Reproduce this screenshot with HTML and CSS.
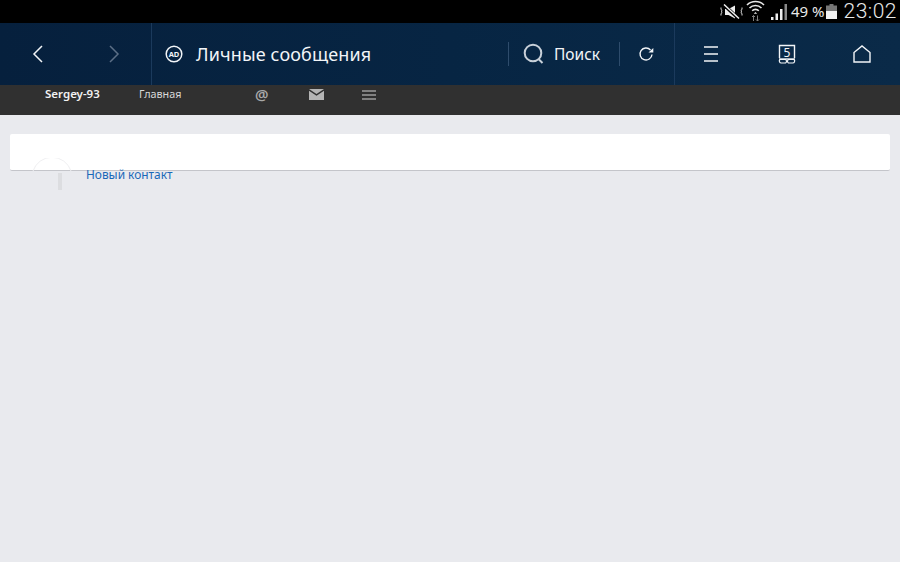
FILE: index.html
```html
<!DOCTYPE html>
<html lang="ru">
<head>
<meta charset="utf-8">
<title>Личные сообщения</title>
<link rel="stylesheet" href="styles.css">
</head>
<body>
<div class="status">
  <svg class="st-mute" width="23" height="16" viewBox="0 0 23 16"><path d="M1 3.500v2l1.200 1-1.200 1 1.200 1-1.200 1v2M22 3.500v2l-1.200 1 1.200 1-1.200 1 1.200 1v2" fill="none" stroke="#ddd" stroke-width="1"/><path d="M5 5h3.500L15 1.500v13L8.500 11H5z" fill="#eee"/><path d="M4 1l15 14" stroke="#000" stroke-width="3.400"/><path d="M4 .5l15 14" stroke="#eee" stroke-width="1.500"/></svg>
  <svg class="st-wifi" width="19" height="22" viewBox="0 0 19 22"><g fill="none" stroke="#e8e8e8" stroke-width="1.600"><path d="M1 5a12 12 0 0 1 17 0"/><path d="M3.500 8a8.500 8.500 0 0 1 12 0"/><path d="M6.200 10.800a4.600 4.600 0 0 1 6.600 0"/></g><path d="M9.500 12l1.700 1.700H7.800z" fill="#e8e8e8"/><path d="M7.500 15.500v5.500M6 17l1.500-1.500L9 17M11.500 15.500v5.500M10 19.500l1.500 1.500 1.500-1.500" fill="none" stroke="#808080" stroke-width="1"/></svg>
  <svg class="st-signal" width="18" height="18" viewBox="0 0 18 18"><path d="M1 14h2.500v3H1z" fill="#eee"/><path d="M5.500 10.500H8V17H5.500z" fill="#eee"/><path d="M10 6h2.500v11H10z" fill="#eee"/><path d="M14.500 1H17v16h-2.500z" fill="#8a8a8a"/></svg>
  <span class="st-pct">49 %</span>
  <svg class="st-batt" width="11" height="15" viewBox="0 0 11 15"><path d="M3.500 0h4v1.500H11V15H0V1.500h3.500z" fill="#777"/><path d="M0 7h11v8H0z" fill="#f2f2f2"/></svg>
  <span class="st-time">23:02</span>
</div>

<header class="nav">
  <div class="nav-arrows">
    <svg class="ico" width="12" height="20" viewBox="0 0 12 20"><path d="M10 2L2 10l8 8" fill="none" stroke="#f2f5f8" stroke-width="1.500"/></svg>
    <svg class="ico" width="12" height="20" viewBox="0 0 12 20"><path d="M2 2l8 8-8 8" fill="none" stroke="#5c6f86" stroke-width="1.500"/></svg>
  </div>
  <div class="nav-title">
    <svg class="ad" width="18" height="18" viewBox="0 0 18 18"><circle cx="9" cy="9" r="7.800" fill="none" stroke="#f2f5f8" stroke-width="1.500"/><text x="9" y="11.800" text-anchor="middle" class="ad-text">AD</text></svg>
    <span class="title">Личные сообщения</span>
  </div>
  <div class="nav-search">
    <svg width="22" height="22" viewBox="0 0 22 22"><circle cx="10" cy="10" r="8.300" fill="none" stroke="#c8d0d9" stroke-width="2"/><path d="M15.500 16l4 4" stroke="#c8d0d9" stroke-width="2"/></svg>
    <span class="search-label">Поиск</span>
  </div>
  <div class="nav-reload">
    <svg width="16" height="16" viewBox="0 0 16 16"><path d="M12.500 4A6 6 0 1 0 14 8.500" fill="none" stroke="#f2f5f8" stroke-width="1.400"/><path d="M10.500 6.500h4.800V2z" fill="#f2f5f8"/></svg>
  </div>
  <div class="nav-tools">
    <svg width="14" height="16" viewBox="0 0 14 16"><path d="M0 1h14M0 8h14M0 15h14" stroke="#f2f5f8" stroke-width="1.400"/></svg>
    <svg width="18" height="20" viewBox="0 0 18 20" class="tabs"><path d="M1.500 14V1.500h15V14" fill="none" stroke="#f2f5f8" stroke-width="1.400"/><text x="9" y="12.500" text-anchor="middle" class="tab-num">5</text><path d="M1 15h16" stroke="#f2f5f8" stroke-width="1.400"/><path d="M2 15.500h5.500a2 2 0 0 1 0 3.500H3.500A2 2 0 0 1 2 15.500zM16 15.500h-5.500a2 2 0 0 0 0 3.500h4A2 2 0 0 0 16 15.500z" fill="none" stroke="#f2f5f8" stroke-width="1.200"/></svg>
    <svg width="18" height="18" viewBox="0 0 18 18"><path d="M1 17V7.500L9 1l8 6.500V17z" fill="none" stroke="#f2f5f8" stroke-width="1.400"/></svg>
  </div>
</header>

<nav class="subnav">
  <span class="user">Sergey-93</span>
  <span class="home">Главная</span>
  <span class="at">@</span>
  <svg class="mail" width="15" height="11" viewBox="0 0 15 11"><path d="M0 0h15L7.500 5z" fill="#b4b4b4"/><path d="M0 1.800l7.500 5 7.500-5V11H0z" fill="#b4b4b4"/></svg>
  <svg class="menu" width="14" height="10" viewBox="0 0 14 10"><path d="M0 1h14M0 5h14M0 9h14" stroke="#9c9c9c" stroke-width="1.500"/></svg>
</nav>

<main class="content">
  <section class="card">
    <svg class="avatar" width="44" height="32" viewBox="0 0 44 32"><path d="M3 13a20 20 0 0 1 38 0" fill="none" stroke="#efeff1" stroke-width="1"/><path d="M28 15h4v17h-4z" fill="#dcdde0"/></svg>
    <a class="new-contact" href="#">Новый контакт</a>
  </section>
</main>
</body>
</html>
```

FILE: styles.css
```css
* { box-sizing: border-box; }
html, body { margin: 0; height: 100%; }
body {
  width: 900px;
  height: 562px;
  overflow: hidden;
  background: #e9eaee;
  font-family: "Noto Sans", "Open Sans", sans-serif;
  display: flex;
  flex-direction: column;
}
.status {
  height: 23px;
  background: #000;
  color: #e8e8e8;
  display: flex;
  align-items: center;
  justify-content: flex-end;
  padding-right: 3px;
  flex: none;
}
.st-mute { margin-right: 3px; }
.st-wifi { margin-right: 5px; margin-top: -1px; }
.st-signal { margin-right: 3px; }
.st-pct { font-size: 15px; line-height: 23px; margin-right: 2px; white-space: nowrap; }
.st-batt { margin-right: 6px; }
.st-time { font-size: 21px; font-weight: 300; line-height: 23px; letter-spacing: .5px; font-family: Roboto, sans-serif; }

.nav {
  height: 62px;
  flex: none;
  background: linear-gradient(90deg, #06203d 0%, #072543 50%, #0a2a48 100%);
  display: flex;
  align-items: center;
  color: #f2f5f8;
}
.nav-arrows {
  width: 152px;
  height: 100%;
  padding: 0 31px 0 32px;
  display: flex;
  align-items: center;
  justify-content: space-between;
  border-right: 1px solid #1b3a5c;
}
.nav-title {
  flex: 1;
  display: flex;
  align-items: center;
  padding-left: 13px;
  gap: 13px;
}
.ad { flex: none; }
.ad-text { font-size: 7.500px; font-weight: 700; fill: #f2f5f8; font-family: "Noto Sans", sans-serif; }
.title { font-size: 18px; letter-spacing: .13px; }
.nav-search {
  width: 112px;
  height: 24px;
  display: flex;
  align-items: center;
  gap: 9px;
  padding-left: 14px;
  border-left: 1px solid #2e4c6c;
  border-right: 1px solid #2e4c6c;
}
.search-label { font-size: 15.500px; }
.nav-reload {
  width: 55px;
  height: 100%;
  display: flex;
  align-items: center;
  justify-content: center;
  padding-right: 2px;
  border-right: 1px solid #1b3a5c;
}
.nav-tools {
  width: 225px;
  display: flex;
  align-items: center;
  justify-content: space-between;
  padding: 0 29px;
}
.tabs { margin-left: 3px; }
.tab-num { font-size: 12px; fill: #f2f5f8; font-family: "Noto Sans", sans-serif; }

.subnav {
  height: 30px;
  flex: none;
  background: #303030;
  display: flex;
  align-items: flex-start;
  padding-top: 1px;
  padding-left: 45px;
  font-size: 11px;
  line-height: 16px;
}
.user { color: #f2f2f2; font-weight: 600; width: 94px; font-size: 11.500px; }
.home { color: #d8d8d8; width: 116px; font-size: 10.800px; }
.at { color: #a8a8a8; font-size: 15px; font-weight: 600; line-height: 16px; width: 54px; }
.mail { margin-top: 3px; margin-right: 38px; }
.menu { margin-top: 4px; }

.content { flex: 1; padding: 19px 10px 0; }
.card {
  height: 37px;
  background: #fff;
  border-radius: 2px;
  border-bottom: 1px solid #c4c5ca;
  position: relative;
}
.avatar { position: absolute; left: 20px; top: 24px; }
.new-contact {
  position: absolute;
  left: 76px;
  top: 32px;
  font-size: 11.900px;
  line-height: 16px;
  color: #1a68b8;
  text-decoration: none;
}
```
